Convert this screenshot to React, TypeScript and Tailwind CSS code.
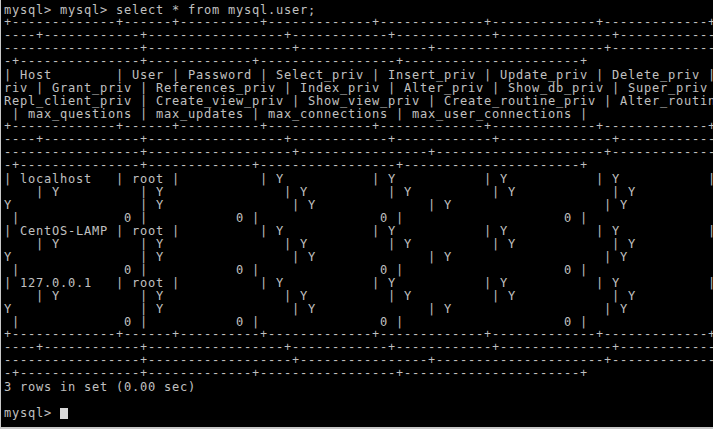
const TERM_COLS = 167;

const privs = [
    "Select", "Insert", "Update", "Delete", "Create", "Drop", "Reload", "Shutdown",
    "Process", "File", "Grant", "References", "Index", "Alter", "Show_db", "Super",
    "Create_tmp_table", "Lock_tables", "Execute", "Repl_slave", "Repl_client",
    "Create_view", "Show_view", "Create_routine", "Alter_routine", "Create_user",
].map((p) => p + "_priv");

const maxCols = ["max_questions", "max_updates", "max_connections", "max_user_connections"];

const columns = [
    "Host", "User", "Password", ...privs,
    "ssl_type", "ssl_cipher", "x509_issuer", "x509_subject", ...maxCols,
];

const rows = ["localhost", "CentOS-LAMP", "127.0.0.1"].map((host) => [
    host, "root", "", ...privs.map(() => "Y"), "", "", "", "", "0", "0", "0", "0",
]);

const widths = columns.map((c, i) => Math.max(c.length, ...rows.map((r) => r[i].length)));
const isNumber = (i: number) => i >= columns.length - maxCols.length;

const separator = "+" + widths.map((w) => "-".repeat(w + 2)).join("+") + "+";

function formatRow(cells: string[], header = false) {
    return (
        "| " +
        cells
            .map((c, i) => (isNumber(i) && !header ? c.padStart(widths[i]) : c.padEnd(widths[i])))
            .join(" | ") +
        " |"
    );
}

type Line = { text: string; rule?: boolean };

// the terminal is wider than the capture, so every long line wraps at TERM_COLS
function wrap(line: string, rule = false): Line[] {
    const out: Line[] = [];
    for (let i = 0; i < line.length; i += TERM_COLS) out.push({ text: line.slice(i, i + TERM_COLS), rule });
    return out;
}

const lines: Line[] = [
    { text: "mysql> mysql> select * from mysql.user;" },
    ...wrap(separator, true),
    ...wrap(formatRow(columns, true)),
    ...wrap(separator, true),
    ...rows.flatMap((r) => wrap(formatRow(r))),
    ...wrap(separator, true),
    { text: "3 rows in set (0.00 sec)" },
    { text: "" },
];

export default function App() {
    return (
        <div className="w-[713px] h-[429px] overflow-hidden bg-black border-l border-b-2 border-[#c8c8c8] pl-[3px] pt-[4px]">
            <div className="font-['DejaVu_Sans_Mono',monospace] text-[12px] leading-[13px] tracking-[0.775px] text-[#c0c0c0] whitespace-pre">
                {lines.map((line, i) =>
                    line.rule ? (
                        <div key={i} className="h-[13px] font-['Liberation_Mono',monospace] tracking-[0.8px]">
                            {line.text.slice(0, 90)}
                        </div>
                    ) : (
                        <div key={i} className="h-[13px]">
                            {line.text.slice(0, 90)}
                        </div>
                    )
                )}
                <div className="h-[13px] flex items-center">
                    <span>mysql&gt; </span>
                    <span className="inline-block w-[8px] h-[11px] bg-[#d8d8d8]" />
                </div>
            </div>
        </div>
    );
}
